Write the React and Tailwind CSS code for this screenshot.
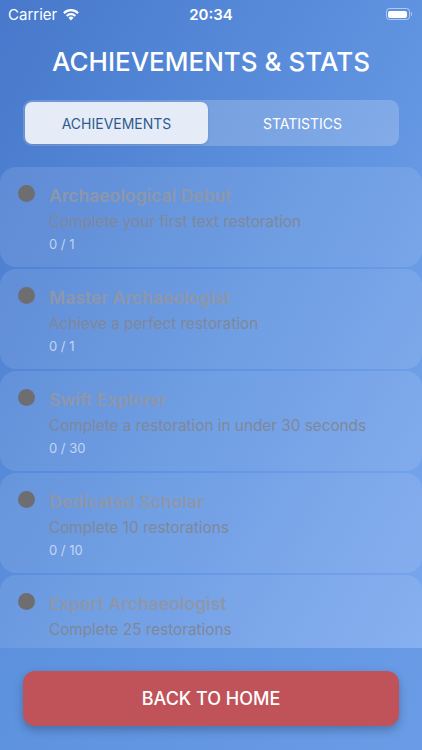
import React from "react";

const items = [
  { t: "Archaeological Debut", d: "Complete your first text restoration", p: "0 / 1" },
  { t: "Master Archaeologist", d: "Achieve a perfect restoration", p: "0 / 1" },
  { t: "Swift Explorer", d: "Complete a restoration in under 30 seconds", p: "0 / 30" },
  { t: "Dedicated Scholar", d: "Complete 10 restorations", p: "0 / 10" },
  { t: "Expert Archaeologist", d: "Complete 25 restorations", p: "" },
];

export default function App() {
  return (
    <div
      className="w-[422px] h-[750px] overflow-hidden flex flex-col bg-gradient-to-br from-[#4778cb] via-[#5f93e0] to-[#7eaaf0] text-white"
      style={{ fontFamily: "Inter, 'Liberation Sans', sans-serif" }}
    >
      {/* status bar */}
      <div className="h-[26px] flex items-center justify-between px-2 pt-[2px]">
        <div className="flex items-center gap-[5px] w-[120px]">
          <span className="text-[15px] leading-none">Carrier</span>
          <svg width="18" height="13" viewBox="0 0 17 12">
            <path d="M8.5 11.7 L6.1 9.1 A3.4 3.4 0 0 1 10.9 9.1 Z" fill="white" />
            <path d="M3.7 6.6 A6.8 6.8 0 0 1 13.3 6.6 L11.8 8.1 A4.7 4.7 0 0 0 5.2 8.1 Z" fill="white" />
            <path d="M1.1 4 A10.4 10.4 0 0 1 15.9 4 L14.4 5.5 A8.3 8.3 0 0 0 2.6 5.5 Z" fill="white" />
          </svg>
        </div>
        <span className="text-[15px] font-semibold leading-none">20:34</span>
        <div className="w-[120px] flex justify-end pr-[2px]">
          <div className="flex items-center">
            <div className="w-[24px] h-[12px] rounded-[3.5px] border border-white/50 p-[1.5px]">
              <div className="w-full h-full bg-white rounded-[2px]" />
            </div>
            <div className="w-[1.5px] h-[4px] bg-white/50 rounded-r ml-[1px]" />
          </div>
        </div>
      </div>

      {/* title */}
      <div className="h-[72px] flex items-center justify-center">
        <h1 className="text-[26px] font-medium leading-none">ACHIEVEMENTS &amp; STATS</h1>
      </div>

      {/* segmented */}
      <div className="px-[23px] mt-[2px]">
        <div className="h-[46px] rounded-[9px] bg-white/20 p-[2px] flex">
          <div className="w-[183px] rounded-[7px] bg-[#e6ecf7] flex items-center justify-center text-[14px] text-[#2e5b8f] shadow-sm">
            ACHIEVEMENTS
          </div>
          <div className="flex-1 flex items-center justify-center text-[14px] text-white">
            STATISTICS
          </div>
        </div>
      </div>

      {/* list */}
      <div className="mt-[21px] flex-1 overflow-hidden flex flex-col gap-[2px]">
        {items.map((it) => (
          <div key={it.t} className="shrink-0 h-[100px] rounded-[16px] bg-white/10 flex pl-[18px] pt-[18px]">
            <div className="w-[17px] h-[17px] rounded-full bg-[#6e6e70] shrink-0" />
            <div className="ml-[14px] flex flex-col pt-[2px]">
              <div className="text-[17.5px] font-semibold leading-[18px] text-[#8d97ab]">{it.t}</div>
              <div className="text-[15.3px] leading-[15px] mt-[9px] text-[#7f8899]">{it.d}</div>
              {it.p && <div className="text-[13px] leading-[13px] mt-[9px] text-white/60">{it.p}</div>}
            </div>
          </div>
        ))}
      </div>

      {/* bottom */}
      <div className="h-[102px] shrink-0 bg-[#5e93e0]/60 px-[23px] pt-[23px]">
        <button className="w-full h-[55px] rounded-[12px] bg-[#c0535a] shadow-[0_4px_10px_rgba(0,0,0,0.25)] text-white text-[18px] font-medium">
          BACK TO HOME
        </button>
      </div>
    </div>
  );
}
